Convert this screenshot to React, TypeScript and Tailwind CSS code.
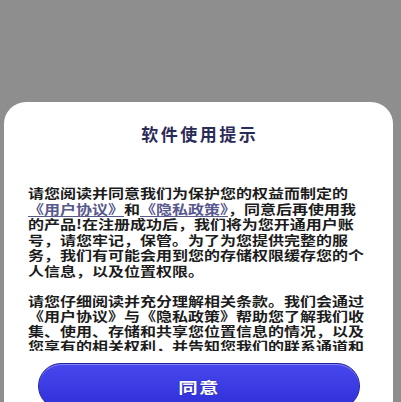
import * as React from 'react';

const Link = ({ children }: { children: React.ReactNode }) => (
  <span className="text-[#58588e] underline decoration-[#58588e] underline-offset-[2px]">{children}</span>
);

const para1: React.ReactNode[] = [
  '请您阅读并同意我们为保护您的权益而制定的',
  <>
    <Link>《用户协议》</Link>和<Link>《隐私政策》</Link>，同意后再使用我
  </>,
  '的产品!在注册成功后，我们将为您开通用户账',
  '号，请您牢记，保管。为了为您提供完整的服',
  '务，我们有可能会用到您的存储权限缓存您的个',
  '人信息，以及位置权限。',
];

const para2 = [
  '请您仔细阅读并充分理解相关条款。我们会通过',
  '《用户协议》与《隐私政策》帮助您了解我们收',
  '集、使用、存储和共享您位置信息的情况，以及',
  '您享有的相关权利，并告知您我们的联系通道和',
  '投诉渠道，请您谨慎阅读。',
];

export default function App() {
  return (
    <div
      className="w-[401px] h-[402px] overflow-hidden bg-[#8e8e8e] pt-[102px] pl-[4px] pr-[8px]"
      style={{ fontFamily: '"Noto Sans CJK SC", "Noto Sans", sans-serif' }}
    >
      <div className="flex h-[330px] flex-col rounded-t-[22px] bg-white">
        <div className="pt-[21px] flex justify-center">
          <h1 className="text-[17px] leading-[22px] font-bold text-[#2b2b58] tracking-[2.5px] pl-[2.5px]">
            软件使用提示
          </h1>
        </div>

        <div className="mt-[40px] h-[166px] overflow-hidden pl-[24px]">
          <div className="origin-left scale-x-[1.25] text-[12.8px] leading-[15.5px] font-semibold text-[#1c1c1c]">
            {para1.map((line, i) => (
              <div key={i} className="whitespace-nowrap">
                {line}
              </div>
            ))}
          </div>
          <div className="mt-[15px] origin-left scale-x-[1.25] text-[12.8px] leading-[15px] font-semibold text-[#1c1c1c]">
            {para2.map((line, i) => (
              <div key={i} className="whitespace-nowrap">
                {line}
              </div>
            ))}
          </div>
        </div>

        <button className="mt-[12px] ml-[34px] h-[46px] w-[322px] rounded-full border border-[#1f1fa6] bg-gradient-to-b from-[#4747ee] to-[#2f2fd8] text-white shadow-[inset_0_1px_0_rgba(255,255,255,0.35)]">
          <span className="inline-block scale-x-[1.3] text-[15px] leading-[20px] font-bold tracking-[1px] [text-shadow:0_0_1px_#1a1a80]">
            同意
          </span>
        </button>
      </div>
    </div>
  );
}
